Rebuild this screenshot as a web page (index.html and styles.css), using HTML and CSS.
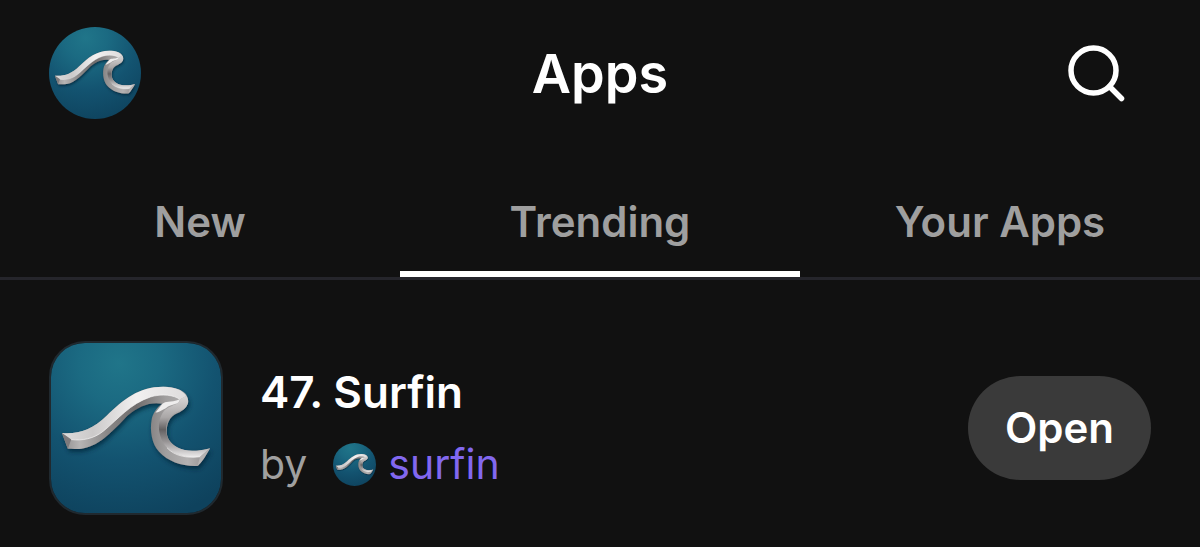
FILE: index.html
```html
<!DOCTYPE html>
<html lang="en">
<head>
<meta charset="utf-8">
<meta name="viewport" content="width=device-width, initial-scale=1">
<title>Apps</title>
<link rel="stylesheet" href="styles.css">
</head>
<body>
<svg class="defs" aria-hidden="true">
  <defs>
    <radialGradient id="sea" cx="0.4" cy="0.12" r="0.95">
      <stop offset="0" stop-color="#207589"/>
      <stop offset="0.25" stop-color="#1b6a82"/>
      <stop offset="0.6" stop-color="#135370"/>
      <stop offset="1" stop-color="#0e425d"/>
    </radialGradient>
    <linearGradient id="steel" x1="0" y1="0" x2="1" y2="0">
      <stop offset="0" stop-color="#8e8d8e"/>
      <stop offset="0.12" stop-color="#b6b4b4"/>
      <stop offset="0.3" stop-color="#8b8989"/>
      <stop offset="0.5" stop-color="#6f6c6c"/>
      <stop offset="0.7" stop-color="#a09e9e"/>
      <stop offset="0.85" stop-color="#b4b2b2"/>
      <stop offset="1" stop-color="#8b8889"/>
    </linearGradient>
    <linearGradient id="shine" x1="0" y1="0" x2="1" y2="0">
      <stop offset="0" stop-color="#dddcdc"/>
      <stop offset="0.25" stop-color="#cccaca"/>
      <stop offset="0.6" stop-color="#f1f0f0"/>
      <stop offset="1" stop-color="#dedcdc"/>
    </linearGradient>
    <linearGradient id="curl" x1="0" y1="0" x2="0" y2="1">
      <stop offset="0" stop-color="#d9d7d7"/>
      <stop offset="0.35" stop-color="#aaa7a7"/>
      <stop offset="0.55" stop-color="#646162"/>
      <stop offset="0.75" stop-color="#999697"/>
      <stop offset="1" stop-color="#ecebeb"/>
    </linearGradient>
    <filter id="shadow" x="-10%" y="-10%" width="120%" height="130%">
      <feDropShadow dx="4" dy="9" stdDeviation="6" flood-color="#04263a" flood-opacity="0.8"/>
    </filter>
    <symbol id="wave" viewBox="31 36 514 514">
      <rect x="31" y="36" width="514" height="514" fill="url(#sea)"/>
      <g filter="url(#shadow)">
        <path fill="url(#steel)" d="M64 308C115 312 155 298 200 255C250 207 295 168 370 168C415 168 446 184 445 210C445 235 425 243 405 252C385 264 378 290 382 315C388 345 425 363 460 362C485 362 500 357 512 354C500 375 488 395 474 408C430 410 385 395 358 365C335 340 330 300 335 270C338 250 350 232 368 220C330 213 295 228 262 256C220 300 180 345 130 354C110 358 95 356 82 356Z"/>
        <path fill="url(#shine)" d="M64 308C115 312 155 298 200 255C250 207 295 168 370 168C405 168 430 179 440 196L420 207C405 193 365 189 332 199C270 220 235 265 190 302C160 326 125 332 92 328Z"/>
        <path fill="url(#curl)" d="M420 207C424 222 385 225 371 244C348 276 356 326 382 353C410 380 450 384 482 380L512 354C485 362 440 367 415 353C383 337 372 305 383 275C390 250 415 244 429 237C449 225 449 208 440 196Z"/>
        <path fill="#eeeded" d="M368 220C378 211 390 217 420 207C420 224 396 218 378 233C365 240 353 247 347 246Z"/>
        <path fill="#7d7a7b" d="M64 308L92 328L82 356Z"/>
        <path fill="#b5b3b3" d="M512 354C500 375 488 395 474 408L482 380Z"/>
        <path class="edge" d="M92 328C125 332 160 326 190 302C235 265 270 220 332 199C365 189 405 193 420 207M482 380C440 385 404 377 382 353"/>
      </g>
    </symbol>
  </defs>
</svg>

<header class="topbar">
  <a class="profile" href="#profile" aria-label="Your profile"><svg class="picture" aria-hidden="true"><use href="#wave"/></svg></a>
  <h1 class="title">Apps</h1>
  <button class="search" type="button" aria-label="Search">
    <svg class="search-icon" viewBox="0 0 60 60" aria-hidden="true"><circle cx="27.500" cy="27.500" r="22.500"/><path d="M43.500 43.500L55.500 55.500"/></svg>
  </button>
</header>

<nav class="tabs" aria-label="App lists">
  <a class="tab" href="#new">New</a>
  <a class="tab tab-current" href="#trending" aria-current="page">Trending</a>
  <a class="tab" href="#your-apps">Your Apps</a>
</nav>

<main class="apps">
  <article class="app">
    <div class="app-icon"><svg class="picture" aria-hidden="true"><use href="#wave"/></svg></div>
    <div class="app-info">
      <h2 class="app-name">47. Surfin</h2>
      <p class="byline">by <a class="author" href="#surfin"><span class="author-avatar"><svg class="picture" aria-hidden="true"><use href="#wave"/></svg></span>surfin</a></p>
    </div>
    <button class="open" type="button">Open</button>
  </article>
</main>
</body>
</html>
```
FILE: styles.css
```css
* {
  box-sizing: border-box;
}

body {
  margin: 0;
  background: #111111;
  color: #ffffff;
  font-family: Inter, "Liberation Sans", sans-serif;
}

a {
  color: inherit;
  text-decoration: none;
}

button {
  border: 0;
  background: none;
  color: inherit;
  font: inherit;
  cursor: pointer;
}

.defs {
  position: absolute;
  width: 0;
  height: 0;
}

.picture {
  display: block;
  width: 100%;
  height: 100%;
}

.edge {
  fill: none;
  stroke: #f7f6f6;
  stroke-width: 2;
}

.topbar {
  display: grid;
  grid-template-columns: 1fr auto 1fr;
  align-items: center;
  padding: 27px 74px 27px 49px;
}

.profile {
  width: 92px;
  height: 92px;
  border-radius: 50%;
  overflow: hidden;
}

.title {
  margin: 0;
  padding: 2px 0 0 25px;
  font-size: 54px;
  line-height: 64px;
  font-weight: 600;
}

.search {
  justify-self: end;
  padding: 0;
}

.search-icon {
  display: block;
  width: 60px;
  height: 60px;
  fill: none;
  stroke: #ffffff;
  stroke-width: 5.500;
  stroke-linecap: round;
}

.tabs {
  display: grid;
  grid-template-columns: repeat(3, 1fr);
  border-bottom: 3px solid #25252b;
}

.tab {
  padding: 50px 0 23px;
  border-bottom: 6px solid transparent;
  color: #9f9f9f;
  font-size: 42px;
  line-height: 52px;
  font-weight: 600;
  text-align: center;
}

.tab-current {
  border-bottom-color: #ffffff;
}

.app {
  display: flex;
  align-items: center;
  padding: 61px 49px 32px;
}

.app-icon {
  width: 174px;
  height: 174px;
  border: 2px solid #20292f;
  border-radius: 36px;
  overflow: hidden;
}

.app-info {
  flex: 1;
  padding-left: 37px;
}

.app-name {
  margin: 0 0 20px;
  font-size: 44px;
  line-height: 52px;
  font-weight: 600;
}

.byline {
  display: flex;
  align-items: center;
  gap: 26px;
  margin: 0;
  color: #a0a0a0;
  font-size: 41px;
  line-height: 52px;
}

.author {
  display: flex;
  align-items: center;
  gap: 12px;
  color: #8268ef;
}

.author-avatar {
  width: 43px;
  height: 43px;
  border-radius: 50%;
  overflow: hidden;
}

.open {
  padding: 26px 37px;
  border-radius: 52px;
  background: #3a3a3a;
  font-size: 42px;
  line-height: 52px;
  font-weight: 600;
}
```
